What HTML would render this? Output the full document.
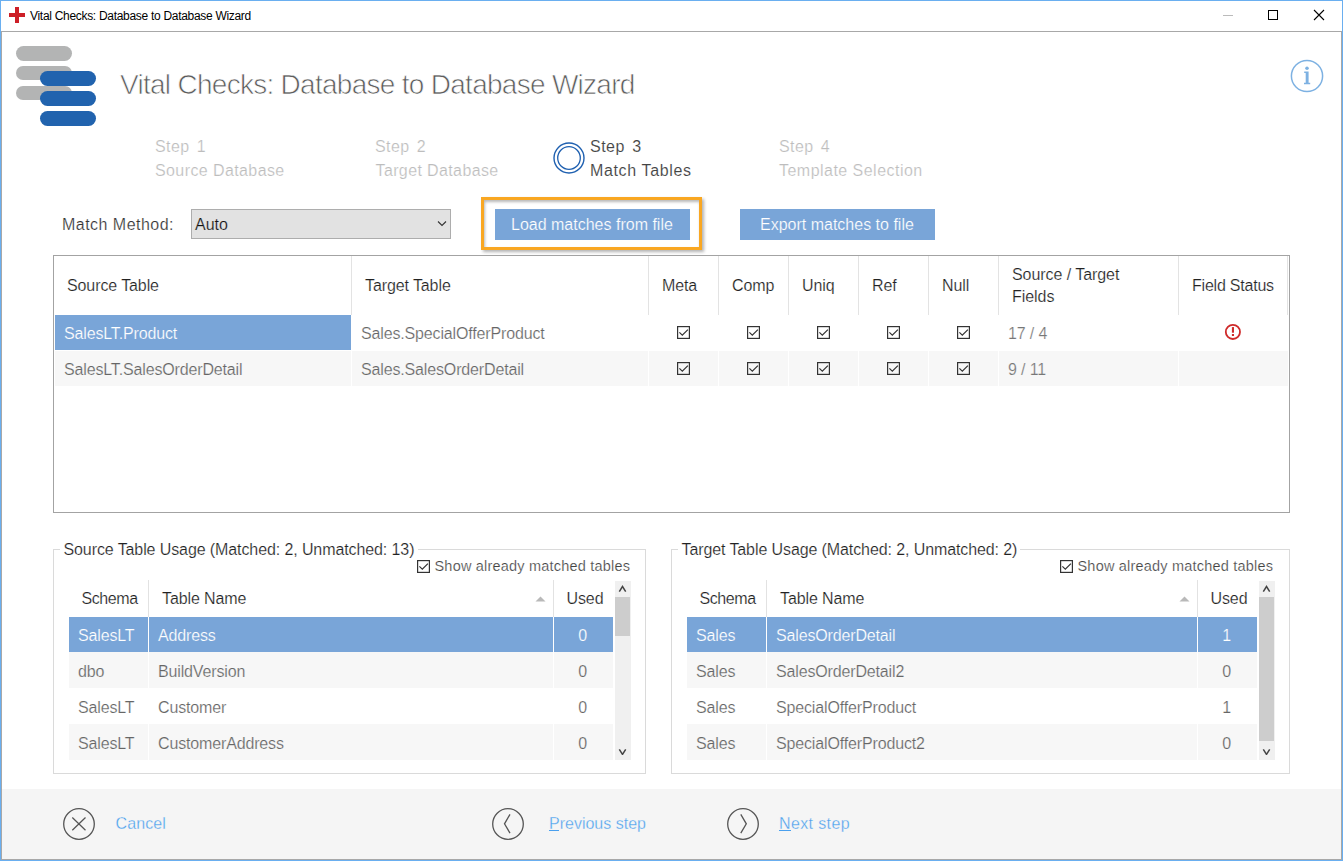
<!DOCTYPE html>
<html><head><meta charset="utf-8">
<style>
html,body{margin:0;padding:0;}
body{width:1343px;height:861px;position:relative;overflow:hidden;background:#fff;font-family:"Liberation Sans",sans-serif;}
.a{position:absolute;}
.t{position:absolute;white-space:nowrap;line-height:1;}
</style></head><body>
<div class="a" style="left:0px;top:0px;width:1343px;height:1px;background:#6aaff0;"></div>
<div class="a" style="left:0px;top:0px;width:1px;height:861px;background:#6aaff0;"></div>
<div class="a" style="left:1342px;top:0px;width:1px;height:861px;background:#6aaff0;"></div>
<div class="a" style="left:0px;top:860px;width:1343px;height:1px;background:#6aaff0;"></div>
<div class="a" style="left:1px;top:31px;width:1341px;height:1px;background:#a8a8a8;"></div>
<div class="a" style="left:1px;top:31px;width:1px;height:829px;background:#a8a8a8;"></div>
<div class="a" style="left:1341px;top:31px;width:1px;height:829px;background:#a8a8a8;"></div>
<div class="a" style="left:1px;top:859px;width:1341px;height:1px;background:#a8a8a8;"></div>
<div class="a" style="left:9px;top:13px;width:16px;height:4px;background:#cd1f27;"></div>
<div class="a" style="left:15px;top:7px;width:4px;height:16px;background:#cd1f27;"></div>
<div class="t" style="left:30px;top:10.00px;font-size:12px;color:#000;letter-spacing:-0.3px;">Vital Checks: Database to Database Wizard</div>
<div class="a" style="left:1223px;top:15px;width:10px;height:1px;background:#bbb;"></div>
<div class="a" style="left:1268px;top:10px;width:8px;height:8px;border:1px solid #000"></div>
<svg class="a" style="left:1313px;top:9px" width="12" height="12" viewBox="0 0 12 12"><path d="M1 1L11 11M11 1L1 11" stroke="#000" stroke-width="1.1"/></svg>
<div class="a" style="left:16px;top:46px;width:56px;height:14.5px;background:#b3b4b4;border-radius:7.5px"></div>
<div class="a" style="left:16px;top:65.5px;width:56px;height:14.5px;background:#b3b4b4;border-radius:7.5px"></div>
<div class="a" style="left:16px;top:85.5px;width:56px;height:14.5px;background:#b3b4b4;border-radius:7.5px"></div>
<div class="a" style="left:40px;top:71px;width:56px;height:15px;background:#2163ae;border-radius:7.5px"></div>
<div class="a" style="left:40px;top:91px;width:56px;height:15px;background:#2163ae;border-radius:7.5px"></div>
<div class="a" style="left:40px;top:111px;width:56px;height:15px;background:#2163ae;border-radius:7.5px"></div>
<div class="t" style="left:120px;top:71.00px;font-size:28px;color:#5c5c5c;letter-spacing:-0.72px;-webkit-text-stroke:0.7px #fff;">Vital Checks: Database to Database Wizard</div>
<svg class="a" style="left:1290px;top:59px" width="34" height="34" viewBox="0 0 34 34">
<circle cx="17" cy="17" r="15.6" fill="none" stroke="#7db1e2" stroke-width="1.5"/>
<circle cx="17" cy="9.3" r="1.75" fill="#7db1e2"/>
<path d="M14.2 12.4h4.4v11.3h1.6v1.5h-6.2v-1.5h1.7v-9.8h-1.5z" fill="#7db1e2"/>
</svg>
<div class="t" style="left:155px;top:139.20px;font-size:16px;color:#bdbdbd;letter-spacing:0.4px;-webkit-text-stroke:0.2px #fff;"><span style="word-spacing:2.3px">Step 1</span></div>
<div class="t" style="left:155px;top:163.00px;font-size:16px;color:#bdbdbd;letter-spacing:0.4px;-webkit-text-stroke:0.2px #fff;">Source Database</div>
<div class="t" style="left:375px;top:139.20px;font-size:16px;color:#bdbdbd;letter-spacing:0.4px;-webkit-text-stroke:0.2px #fff;"><span style="word-spacing:2.3px">Step 2</span></div>
<div class="t" style="left:375.5px;top:163.00px;font-size:16px;color:#bdbdbd;letter-spacing:0.38px;-webkit-text-stroke:0.2px #fff;">Target Database</div>
<svg class="a" style="left:552px;top:141px" width="34" height="34" viewBox="0 0 34 34">
<circle cx="17" cy="17" r="15" fill="none" stroke="#1f60b0" stroke-width="1.4"/>
<circle cx="17" cy="17" r="11.3" fill="none" stroke="#1f60b0" stroke-width="1.3"/>
</svg>
<div class="t" style="left:590px;top:139.20px;font-size:16px;color:#444;letter-spacing:0.5px;-webkit-text-stroke:0.1px #fff;"><span style="word-spacing:2.3px">Step 3</span></div>
<div class="t" style="left:590px;top:163.00px;font-size:16px;color:#444;letter-spacing:0.64px;-webkit-text-stroke:0.1px #fff;">Match Tables</div>
<div class="t" style="left:779px;top:139.20px;font-size:16px;color:#bdbdbd;letter-spacing:0.4px;-webkit-text-stroke:0.2px #fff;"><span style="word-spacing:2.3px">Step 4</span></div>
<div class="t" style="left:779px;top:163.00px;font-size:16px;color:#bdbdbd;letter-spacing:0.47px;-webkit-text-stroke:0.2px #fff;">Template Selection</div>
<div class="t" style="left:62px;top:217.00px;font-size:16px;color:#333;letter-spacing:0.47px;-webkit-text-stroke:0.2px #fff;">Match Method:</div>
<div class="a" style="left:191px;top:209px;width:258px;height:28px;border:1px solid #adadad;background:#e2e2e2"></div>
<div class="t" style="left:195px;top:217.00px;font-size:16px;color:#111;letter-spacing:0px;-webkit-text-stroke:0.2px #e2e2e2;">Auto</div>
<svg class="a" style="left:437px;top:220px" width="10" height="7" viewBox="0 0 10 7"><path d="M1 1.5L5 5.5L9 1.5" fill="none" stroke="#333" stroke-width="1.1"/></svg>
<div class="a" style="left:481px;top:197px;width:221px;height:53px;box-sizing:border-box;border:3px solid #f9a722;box-shadow:2px 2px 3px rgba(0,0,0,0.3), inset 1px 2px 3px rgba(0,0,0,0.28)"></div>
<div class="a" style="left:495px;top:209px;width:195px;height:31px;background:#79a5d8;"></div>
<div class="t" style="left:511px;top:217.00px;font-size:16px;color:#fff;letter-spacing:0px;-webkit-text-stroke:0.2px #79a5d8;">Load matches from file</div>
<div class="a" style="left:740px;top:209px;width:195px;height:31px;background:#79a5d8;"></div>
<div class="t" style="left:760px;top:217.00px;font-size:16px;color:#fff;letter-spacing:0px;-webkit-text-stroke:0.2px #79a5d8;">Export matches to file</div>
<div class="a" style="left:53px;top:255px;width:1235px;height:256px;border:1px solid #a3a3a3;background:#fff"></div>
<div class="a" style="left:351px;top:256px;width:1px;height:59px;background:#e3e3e3;"></div>
<div class="a" style="left:648px;top:256px;width:1px;height:59px;background:#e3e3e3;"></div>
<div class="a" style="left:718px;top:256px;width:1px;height:59px;background:#e3e3e3;"></div>
<div class="a" style="left:788px;top:256px;width:1px;height:59px;background:#e3e3e3;"></div>
<div class="a" style="left:858px;top:256px;width:1px;height:59px;background:#e3e3e3;"></div>
<div class="a" style="left:928px;top:256px;width:1px;height:59px;background:#e3e3e3;"></div>
<div class="a" style="left:998px;top:256px;width:1px;height:59px;background:#e3e3e3;"></div>
<div class="a" style="left:1178px;top:256px;width:1px;height:59px;background:#e3e3e3;"></div>
<div class="a" style="left:1287px;top:256px;width:1px;height:59px;background:#e3e3e3;"></div>
<div class="t" style="left:67px;top:278.00px;font-size:16px;color:#222;letter-spacing:-0.1px;-webkit-text-stroke:0.2px #fff;">Source Table</div>
<div class="t" style="left:365px;top:278.00px;font-size:16px;color:#222;letter-spacing:-0.1px;-webkit-text-stroke:0.2px #fff;">Target Table</div>
<div class="t" style="left:662px;top:278.00px;font-size:16px;color:#222;letter-spacing:-0.1px;-webkit-text-stroke:0.2px #fff;">Meta</div>
<div class="t" style="left:732px;top:278.00px;font-size:16px;color:#222;letter-spacing:-0.1px;-webkit-text-stroke:0.2px #fff;">Comp</div>
<div class="t" style="left:802px;top:278.00px;font-size:16px;color:#222;letter-spacing:-0.1px;-webkit-text-stroke:0.2px #fff;">Uniq</div>
<div class="t" style="left:872px;top:278.00px;font-size:16px;color:#222;letter-spacing:-0.1px;-webkit-text-stroke:0.2px #fff;">Ref</div>
<div class="t" style="left:942px;top:278.00px;font-size:16px;color:#222;letter-spacing:-0.1px;-webkit-text-stroke:0.2px #fff;">Null</div>
<div class="t" style="left:1192px;top:278.00px;font-size:16px;color:#222;letter-spacing:-0.22px;-webkit-text-stroke:0.2px #fff;">Field Status</div>
<div class="t" style="left:1012px;top:267.00px;font-size:16px;color:#222;letter-spacing:-0.06px;-webkit-text-stroke:0.2px #fff;">Source / Target</div>
<div class="t" style="left:1012px;top:289.00px;font-size:16px;color:#222;letter-spacing:-0.06px;-webkit-text-stroke:0.2px #fff;">Fields</div>
<div class="a" style="left:55px;top:315px;width:296px;height:35px;background:#79a5d8;"></div>
<div class="a" style="left:55px;top:351px;width:296px;height:35px;background:#f7f7f7;"></div>
<div class="a" style="left:352px;top:351px;width:296px;height:35px;background:#f7f7f7;"></div>
<div class="a" style="left:649px;top:351px;width:69px;height:35px;background:#f7f7f7;"></div>
<div class="a" style="left:719px;top:351px;width:69px;height:35px;background:#f7f7f7;"></div>
<div class="a" style="left:789px;top:351px;width:69px;height:35px;background:#f7f7f7;"></div>
<div class="a" style="left:859px;top:351px;width:69px;height:35px;background:#f7f7f7;"></div>
<div class="a" style="left:929px;top:351px;width:69px;height:35px;background:#f7f7f7;"></div>
<div class="a" style="left:999px;top:351px;width:179px;height:35px;background:#f7f7f7;"></div>
<div class="a" style="left:1179px;top:351px;width:109px;height:35px;background:#f7f7f7;"></div>
<div class="t" style="left:64px;top:326.00px;font-size:16px;color:#fff;letter-spacing:-0.15px;-webkit-text-stroke:0.2px #79a5d8;">SalesLT.Product</div>
<div class="t" style="left:361px;top:326.00px;font-size:16px;color:#666;letter-spacing:-0.15px;-webkit-text-stroke:0.2px #fff;">Sales.SpecialOfferProduct</div>
<div class="t" style="left:64px;top:362.00px;font-size:16px;color:#666;letter-spacing:-0.15px;-webkit-text-stroke:0.2px #f7f7f7;">SalesLT.SalesOrderDetail</div>
<div class="t" style="left:361px;top:362.00px;font-size:16px;color:#666;letter-spacing:-0.15px;-webkit-text-stroke:0.2px #f7f7f7;">Sales.SalesOrderDetail</div>
<div class="t" style="left:1008px;top:326.00px;font-size:16px;color:#777;letter-spacing:-0.15px;-webkit-text-stroke:0.2px #fff;">17 / 4</div>
<div class="t" style="left:1008px;top:362.00px;font-size:16px;color:#777;letter-spacing:-0.15px;-webkit-text-stroke:0.2px #f7f7f7;">9 / 11</div>
<svg class="a" style="left:677px;top:326px" width="13" height="13" viewBox="0 0 13 13"><rect x="0.6" y="0.6" width="11.8" height="11.8" fill="none" stroke="#333" stroke-width="1.2"/><path d="M2.4 6.4L5.3 9.1L10.9 3.6" fill="none" stroke="#333" stroke-width="1.2"/></svg>
<svg class="a" style="left:677px;top:362px" width="13" height="13" viewBox="0 0 13 13"><rect x="0.6" y="0.6" width="11.8" height="11.8" fill="none" stroke="#333" stroke-width="1.2"/><path d="M2.4 6.4L5.3 9.1L10.9 3.6" fill="none" stroke="#333" stroke-width="1.2"/></svg>
<svg class="a" style="left:747px;top:326px" width="13" height="13" viewBox="0 0 13 13"><rect x="0.6" y="0.6" width="11.8" height="11.8" fill="none" stroke="#333" stroke-width="1.2"/><path d="M2.4 6.4L5.3 9.1L10.9 3.6" fill="none" stroke="#333" stroke-width="1.2"/></svg>
<svg class="a" style="left:747px;top:362px" width="13" height="13" viewBox="0 0 13 13"><rect x="0.6" y="0.6" width="11.8" height="11.8" fill="none" stroke="#333" stroke-width="1.2"/><path d="M2.4 6.4L5.3 9.1L10.9 3.6" fill="none" stroke="#333" stroke-width="1.2"/></svg>
<svg class="a" style="left:817px;top:326px" width="13" height="13" viewBox="0 0 13 13"><rect x="0.6" y="0.6" width="11.8" height="11.8" fill="none" stroke="#333" stroke-width="1.2"/><path d="M2.4 6.4L5.3 9.1L10.9 3.6" fill="none" stroke="#333" stroke-width="1.2"/></svg>
<svg class="a" style="left:817px;top:362px" width="13" height="13" viewBox="0 0 13 13"><rect x="0.6" y="0.6" width="11.8" height="11.8" fill="none" stroke="#333" stroke-width="1.2"/><path d="M2.4 6.4L5.3 9.1L10.9 3.6" fill="none" stroke="#333" stroke-width="1.2"/></svg>
<svg class="a" style="left:887px;top:326px" width="13" height="13" viewBox="0 0 13 13"><rect x="0.6" y="0.6" width="11.8" height="11.8" fill="none" stroke="#333" stroke-width="1.2"/><path d="M2.4 6.4L5.3 9.1L10.9 3.6" fill="none" stroke="#333" stroke-width="1.2"/></svg>
<svg class="a" style="left:887px;top:362px" width="13" height="13" viewBox="0 0 13 13"><rect x="0.6" y="0.6" width="11.8" height="11.8" fill="none" stroke="#333" stroke-width="1.2"/><path d="M2.4 6.4L5.3 9.1L10.9 3.6" fill="none" stroke="#333" stroke-width="1.2"/></svg>
<svg class="a" style="left:957px;top:326px" width="13" height="13" viewBox="0 0 13 13"><rect x="0.6" y="0.6" width="11.8" height="11.8" fill="none" stroke="#333" stroke-width="1.2"/><path d="M2.4 6.4L5.3 9.1L10.9 3.6" fill="none" stroke="#333" stroke-width="1.2"/></svg>
<svg class="a" style="left:957px;top:362px" width="13" height="13" viewBox="0 0 13 13"><rect x="0.6" y="0.6" width="11.8" height="11.8" fill="none" stroke="#333" stroke-width="1.2"/><path d="M2.4 6.4L5.3 9.1L10.9 3.6" fill="none" stroke="#333" stroke-width="1.2"/></svg>
<svg class="a" style="left:1224px;top:323px" width="18" height="18" viewBox="0 0 18 18"><circle cx="8.9" cy="8.9" r="7.1" fill="none" stroke="#cf2a2a" stroke-width="1.8"/><rect x="7.9" y="4.1" width="2.1" height="5.6" fill="#cf2a2a"/><rect x="7.9" y="11" width="2.1" height="2" fill="#cf2a2a"/></svg>
<div class="a" style="left:53px;top:549px;width:591px;height:223px;border:1px solid #dadada"></div>
<div class="a" style="left:60px;top:540px;width:358px;height:14px;background:#fff;"></div>
<div class="t" style="left:63.5px;top:542.30px;font-size:16px;color:#222;letter-spacing:-0.1px;-webkit-text-stroke:0.2px #fff;">Source Table Usage (Matched: 2, Unmatched: 13)</div>
<svg class="a" style="left:417px;top:560px" width="13" height="13" viewBox="0 0 13 13"><rect x="0.6" y="0.6" width="11.8" height="11.8" fill="none" stroke="#333" stroke-width="1.2"/><path d="M2.4 6.4L5.3 9.1L10.9 3.6" fill="none" stroke="#333" stroke-width="1.2"/></svg>
<div class="t" style="left:434.5px;top:559.00px;font-size:14.5px;color:#444;letter-spacing:0.2px;-webkit-text-stroke:0.2px #fff;">Show already matched tables</div>
<div class="a" style="left:148px;top:580px;width:1px;height:37px;background:#e2e2e2;"></div>
<div class="a" style="left:553px;top:580px;width:1px;height:37px;background:#e2e2e2;"></div>
<div class="t" style="left:81.5px;top:591.00px;font-size:16px;color:#222;letter-spacing:-0.4px;-webkit-text-stroke:0.2px #fff;">Schema</div>
<div class="t" style="left:162px;top:591.00px;font-size:16px;color:#222;letter-spacing:-0.1px;-webkit-text-stroke:0.2px #fff;">Table Name</div>
<svg class="a" style="left:535px;top:596px" width="11" height="6" viewBox="0 0 11 6"><path d="M0.5 5.5L5.5 0.5L10.5 5.5Z" fill="#b9b9b9"/></svg>
<div class="t" style="left:566.5px;top:591.00px;font-size:16px;color:#222;letter-spacing:-0.1px;-webkit-text-stroke:0.2px #fff;">Used</div>
<div class="a" style="left:69px;top:617px;width:79px;height:35px;background:#79a5d8;"></div>
<div class="a" style="left:149px;top:617px;width:404px;height:35px;background:#79a5d8;"></div>
<div class="a" style="left:554px;top:617px;width:59px;height:35px;background:#79a5d8;"></div>
<div class="t" style="left:78px;top:628.00px;font-size:16px;color:#fff;letter-spacing:-0.15px;-webkit-text-stroke:0.2px #79a5d8;">SalesLT</div>
<div class="t" style="left:158px;top:628.00px;font-size:16px;color:#fff;letter-spacing:-0.15px;-webkit-text-stroke:0.2px #79a5d8;">Address</div>
<div class="t" style="left:532.8px;width:100px;text-align:center;top:628.00px;font-size:16px;color:#fff;letter-spacing:0px;-webkit-text-stroke:0.2px #79a5d8;">0</div>
<div class="a" style="left:69px;top:652px;width:79px;height:36px;background:#f7f7f7;"></div>
<div class="a" style="left:149px;top:652px;width:404px;height:36px;background:#f7f7f7;"></div>
<div class="a" style="left:554px;top:652px;width:59px;height:36px;background:#f7f7f7;"></div>
<div class="t" style="left:78px;top:664.00px;font-size:16px;color:#666;letter-spacing:-0.15px;-webkit-text-stroke:0.2px #f7f7f7;">dbo</div>
<div class="t" style="left:158px;top:664.00px;font-size:16px;color:#666;letter-spacing:-0.15px;-webkit-text-stroke:0.2px #f7f7f7;">BuildVersion</div>
<div class="t" style="left:532.8px;width:100px;text-align:center;top:664.00px;font-size:16px;color:#666;letter-spacing:0px;-webkit-text-stroke:0.2px #f7f7f7;">0</div>
<div class="a" style="left:69px;top:688px;width:79px;height:36px;background:#ffffff;"></div>
<div class="a" style="left:149px;top:688px;width:404px;height:36px;background:#ffffff;"></div>
<div class="a" style="left:554px;top:688px;width:59px;height:36px;background:#ffffff;"></div>
<div class="t" style="left:78px;top:700.00px;font-size:16px;color:#666;letter-spacing:-0.15px;-webkit-text-stroke:0.2px #ffffff;">SalesLT</div>
<div class="t" style="left:158px;top:700.00px;font-size:16px;color:#666;letter-spacing:-0.15px;-webkit-text-stroke:0.2px #ffffff;">Customer</div>
<div class="t" style="left:532.8px;width:100px;text-align:center;top:700.00px;font-size:16px;color:#666;letter-spacing:0px;-webkit-text-stroke:0.2px #ffffff;">0</div>
<div class="a" style="left:69px;top:724px;width:79px;height:36px;background:#f7f7f7;"></div>
<div class="a" style="left:149px;top:724px;width:404px;height:36px;background:#f7f7f7;"></div>
<div class="a" style="left:554px;top:724px;width:59px;height:36px;background:#f7f7f7;"></div>
<div class="t" style="left:78px;top:736.00px;font-size:16px;color:#666;letter-spacing:-0.15px;-webkit-text-stroke:0.2px #f7f7f7;">SalesLT</div>
<div class="t" style="left:158px;top:736.00px;font-size:16px;color:#666;letter-spacing:-0.15px;-webkit-text-stroke:0.2px #f7f7f7;">CustomerAddress</div>
<div class="t" style="left:532.8px;width:100px;text-align:center;top:736.00px;font-size:16px;color:#666;letter-spacing:0px;-webkit-text-stroke:0.2px #f7f7f7;">0</div>
<div class="a" style="left:615px;top:581px;width:16px;height:179px;background:#f0f0f0;"></div>
<div class="a" style="left:615px;top:597px;width:15px;height:39px;background:#cdcdcd;"></div>
<svg class="a" style="left:618px;top:585px" width="10" height="7" viewBox="0 0 10 7"><path d="M1.3 6.6L4.5 1.5L7.7 6.6" fill="none" stroke="#444" stroke-width="1.5"/></svg>
<svg class="a" style="left:618px;top:748px" width="10" height="7" viewBox="0 0 10 7"><path d="M1.3 1.3L4.5 6.4L7.7 1.3" fill="none" stroke="#444" stroke-width="1.5"/></svg>
<div class="a" style="left:671px;top:549px;width:617px;height:223px;border:1px solid #dadada"></div>
<div class="a" style="left:678px;top:540px;width:342px;height:14px;background:#fff;"></div>
<div class="t" style="left:681.5px;top:542.30px;font-size:16px;color:#222;letter-spacing:-0.1px;-webkit-text-stroke:0.2px #fff;">Target Table Usage (Matched: 2, Unmatched: 2)</div>
<svg class="a" style="left:1060px;top:560px" width="13" height="13" viewBox="0 0 13 13"><rect x="0.6" y="0.6" width="11.8" height="11.8" fill="none" stroke="#333" stroke-width="1.2"/><path d="M2.4 6.4L5.3 9.1L10.9 3.6" fill="none" stroke="#333" stroke-width="1.2"/></svg>
<div class="t" style="left:1077.5px;top:559.00px;font-size:14.5px;color:#444;letter-spacing:0.2px;-webkit-text-stroke:0.2px #fff;">Show already matched tables</div>
<div class="a" style="left:766px;top:580px;width:1px;height:37px;background:#e2e2e2;"></div>
<div class="a" style="left:1197px;top:580px;width:1px;height:37px;background:#e2e2e2;"></div>
<div class="t" style="left:699.5px;top:591.00px;font-size:16px;color:#222;letter-spacing:-0.4px;-webkit-text-stroke:0.2px #fff;">Schema</div>
<div class="t" style="left:780px;top:591.00px;font-size:16px;color:#222;letter-spacing:-0.1px;-webkit-text-stroke:0.2px #fff;">Table Name</div>
<svg class="a" style="left:1179px;top:596px" width="11" height="6" viewBox="0 0 11 6"><path d="M0.5 5.5L5.5 0.5L10.5 5.5Z" fill="#b9b9b9"/></svg>
<div class="t" style="left:1210.5px;top:591.00px;font-size:16px;color:#222;letter-spacing:-0.1px;-webkit-text-stroke:0.2px #fff;">Used</div>
<div class="a" style="left:687px;top:617px;width:79px;height:35px;background:#79a5d8;"></div>
<div class="a" style="left:767px;top:617px;width:430px;height:35px;background:#79a5d8;"></div>
<div class="a" style="left:1198px;top:617px;width:59px;height:35px;background:#79a5d8;"></div>
<div class="t" style="left:696px;top:628.00px;font-size:16px;color:#fff;letter-spacing:-0.15px;-webkit-text-stroke:0.2px #79a5d8;">Sales</div>
<div class="t" style="left:776px;top:628.00px;font-size:16px;color:#fff;letter-spacing:-0.15px;-webkit-text-stroke:0.2px #79a5d8;">SalesOrderDetail</div>
<div class="t" style="left:1176.8px;width:100px;text-align:center;top:628.00px;font-size:16px;color:#fff;letter-spacing:0px;-webkit-text-stroke:0.2px #79a5d8;">1</div>
<div class="a" style="left:687px;top:652px;width:79px;height:36px;background:#f7f7f7;"></div>
<div class="a" style="left:767px;top:652px;width:430px;height:36px;background:#f7f7f7;"></div>
<div class="a" style="left:1198px;top:652px;width:59px;height:36px;background:#f7f7f7;"></div>
<div class="t" style="left:696px;top:664.00px;font-size:16px;color:#666;letter-spacing:-0.15px;-webkit-text-stroke:0.2px #f7f7f7;">Sales</div>
<div class="t" style="left:776px;top:664.00px;font-size:16px;color:#666;letter-spacing:-0.15px;-webkit-text-stroke:0.2px #f7f7f7;">SalesOrderDetail2</div>
<div class="t" style="left:1176.8px;width:100px;text-align:center;top:664.00px;font-size:16px;color:#666;letter-spacing:0px;-webkit-text-stroke:0.2px #f7f7f7;">0</div>
<div class="a" style="left:687px;top:688px;width:79px;height:36px;background:#ffffff;"></div>
<div class="a" style="left:767px;top:688px;width:430px;height:36px;background:#ffffff;"></div>
<div class="a" style="left:1198px;top:688px;width:59px;height:36px;background:#ffffff;"></div>
<div class="t" style="left:696px;top:700.00px;font-size:16px;color:#666;letter-spacing:-0.15px;-webkit-text-stroke:0.2px #ffffff;">Sales</div>
<div class="t" style="left:776px;top:700.00px;font-size:16px;color:#666;letter-spacing:-0.15px;-webkit-text-stroke:0.2px #ffffff;">SpecialOfferProduct</div>
<div class="t" style="left:1176.8px;width:100px;text-align:center;top:700.00px;font-size:16px;color:#666;letter-spacing:0px;-webkit-text-stroke:0.2px #ffffff;">1</div>
<div class="a" style="left:687px;top:724px;width:79px;height:36px;background:#f7f7f7;"></div>
<div class="a" style="left:767px;top:724px;width:430px;height:36px;background:#f7f7f7;"></div>
<div class="a" style="left:1198px;top:724px;width:59px;height:36px;background:#f7f7f7;"></div>
<div class="t" style="left:696px;top:736.00px;font-size:16px;color:#666;letter-spacing:-0.15px;-webkit-text-stroke:0.2px #f7f7f7;">Sales</div>
<div class="t" style="left:776px;top:736.00px;font-size:16px;color:#666;letter-spacing:-0.15px;-webkit-text-stroke:0.2px #f7f7f7;">SpecialOfferProduct2</div>
<div class="t" style="left:1176.8px;width:100px;text-align:center;top:736.00px;font-size:16px;color:#666;letter-spacing:0px;-webkit-text-stroke:0.2px #f7f7f7;">0</div>
<div class="a" style="left:1259px;top:581px;width:16px;height:179px;background:#f0f0f0;"></div>
<div class="a" style="left:1259px;top:597px;width:15px;height:144px;background:#cdcdcd;"></div>
<svg class="a" style="left:1262px;top:585px" width="10" height="7" viewBox="0 0 10 7"><path d="M1.3 6.6L4.5 1.5L7.7 6.6" fill="none" stroke="#444" stroke-width="1.5"/></svg>
<svg class="a" style="left:1262px;top:748px" width="10" height="7" viewBox="0 0 10 7"><path d="M1.3 1.3L4.5 6.4L7.7 1.3" fill="none" stroke="#444" stroke-width="1.5"/></svg>
<div class="a" style="left:2px;top:789px;width:1339px;height:70px;background:#f5f5f5;"></div>
<svg class="a" style="left:62px;top:807px" width="34" height="34" viewBox="0 0 34 34"><circle cx="17" cy="17" r="15.3" fill="none" stroke="#555" stroke-width="1.3"/><path d="M10.3 10.5L23.5 23.3M23.5 10.5L10.3 23.3" stroke="#555" stroke-width="1.25"/></svg>
<svg class="a" style="left:491px;top:807px" width="34" height="34" viewBox="0 0 34 34"><circle cx="17" cy="17" r="15.3" fill="none" stroke="#555" stroke-width="1.3"/><path d="M19 7.3L13.5 16.8L19 26.1" fill="none" stroke="#555" stroke-width="1.3"/></svg>
<svg class="a" style="left:726px;top:807px" width="34" height="34" viewBox="0 0 34 34"><circle cx="17" cy="17" r="15.3" fill="none" stroke="#555" stroke-width="1.3"/><path d="M14.8 7.3L20.3 16.8L14.8 26.1" fill="none" stroke="#555" stroke-width="1.3"/></svg>
<div class="t" style="left:115.5px;top:816.00px;font-size:16px;color:#4aa0ee;letter-spacing:0.1px;-webkit-text-stroke:0.3px #f5f5f5;">Cancel</div>
<div class="t" style="left:549px;top:816.00px;font-size:16px;color:#4aa0ee;letter-spacing:0px;-webkit-text-stroke:0.3px #f5f5f5;">Previous step</div>
<div class="t" style="left:779px;top:816.00px;font-size:16px;color:#4aa0ee;letter-spacing:0.38px;-webkit-text-stroke:0.3px #f5f5f5;">Next step</div>
<div class="a" style="left:549px;top:830px;width:10px;height:1px;background:#4aa0ee;"></div>
<div class="a" style="left:779px;top:830px;width:12px;height:1px;background:#4aa0ee;"></div>
</body></html>
